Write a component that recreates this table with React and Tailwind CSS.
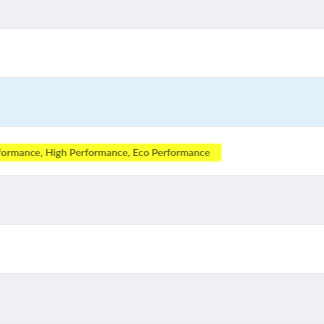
const rows = [
  { h: "h-[29px]", bg: "bg-[#eff0f4]" },
  { h: "h-[49px]", bg: "bg-white" },
  { h: "h-[49px]", bg: "bg-[#e1f1fc]" },
  { h: "h-[49px]", bg: "bg-white", text: "Performance, High Performance, Eco Performance" },
  { h: "h-[49px]", bg: "bg-[#eff0f4]" },
  { h: "h-[49px]", bg: "bg-white" },
  { h: "h-[50px]", bg: "bg-[#eff0f4]" },
];

export default function App() {
  return (
    <div className="w-[324px] h-[324px] overflow-hidden bg-white font-['Lato',sans-serif]">
      {rows.map((row, i) => (
        <div
          key={i}
          className={`${row.h} ${row.bg} flex items-center border-b border-[#eaecf0] overflow-hidden`}
        >
          {row.text && (
            <span className="ml-[-18px] mt-[2px] pr-[11px] py-[2px] bg-[#fbff2a] text-[#68671c] text-[10.3px] leading-[13px] font-semibold whitespace-nowrap shadow-[0_0_3px_#fbff2a]">
              {row.text}
            </span>
          )}
        </div>
      ))}
    </div>
  );
}
